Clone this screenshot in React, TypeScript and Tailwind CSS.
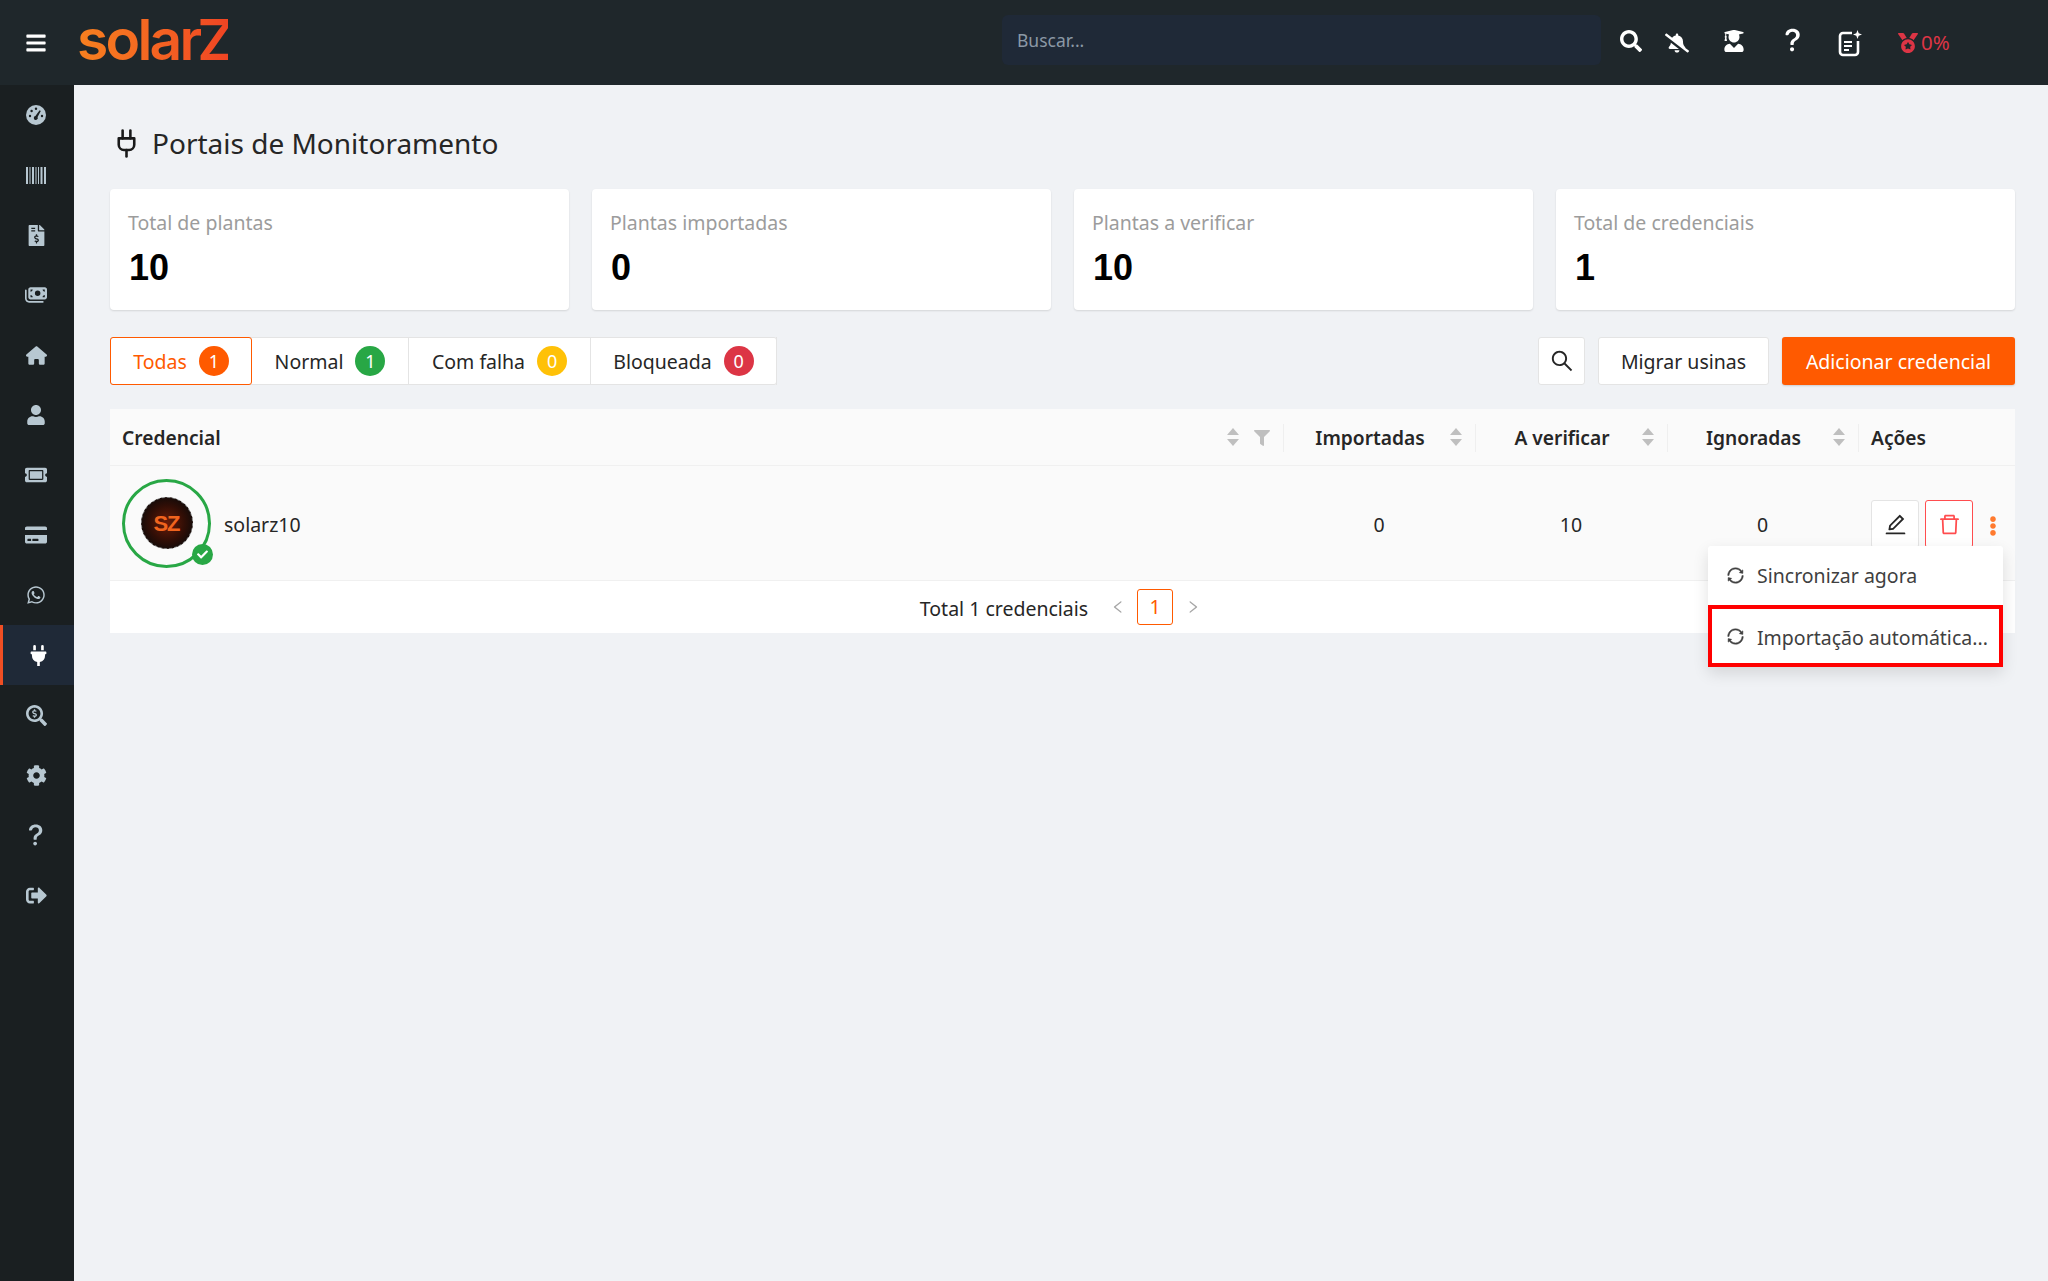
import React from 'react';
import {
  FaBars, FaBellSlash, FaCog, FaCreditCard, FaEllipsisV, FaFileInvoiceDollar, FaFilter,
  FaMedal, FaPlug, FaSearch, FaSearchDollar, FaSignOutAlt,
  FaTicketAlt, FaUser, FaUserGraduate, FaWhatsapp, FaCheck,
} from 'react-icons/fa';
import { FaHouse, FaMoneyBills } from 'react-icons/fa6';
import { BsQuestionLg } from 'react-icons/bs';
import { AiOutlineDelete, AiOutlineEdit, AiOutlineLeft, AiOutlineRight, AiOutlineSearch, AiOutlineSync } from 'react-icons/ai';
import { LuPlug } from 'react-icons/lu';

const GaugeIcon = ({ className }: { className?: string }) => (
  <svg viewBox="0 0 20 20" width="20" height="20" className={className}>
    <circle cx="10" cy="10" r="10" fill="currentColor" />
    <g fill="#1a1f21">
      <circle cx="4" cy="11" r="1.2" />
      <circle cx="5.6" cy="6" r="1.2" />
      <circle cx="10" cy="3.8" r="1.2" />
      <circle cx="16" cy="11" r="1.2" />
      <path d="M13.6 5.2l1.2.7-3.2 6.2a2 2 0 1 1-2.2-1.1z" />
    </g>
  </svg>
);

const BarsIcon = ({ className }: { className?: string }) => (
  <svg viewBox="0 0 20 17" width="20" height="17" className={className} fill="currentColor">
    <path d="M0 0h2v17H0zM3.5 0h1v17h-1zM6 0h2v17H6zM9.5 0h1v17h-1zM12 0h1v17h-1zM14.5 0h2v17h-2zM18 0h2v17h-2z" />
  </svg>
);

const SideQuestion = () => <BsQuestionLg className="text-[28px]" />;

const navItems = [
  { Icon: GaugeIcon, size: 'text-[21px]' },
  { Icon: BarsIcon, size: 'text-[21px]' },
  { Icon: FaFileInvoiceDollar, size: 'text-[21px]' },
  { Icon: FaMoneyBills, size: 'text-[22px]' },
  { Icon: FaHouse, size: 'text-[21px]' },
  { Icon: FaUser, size: 'text-[20px]' },
  { Icon: FaTicketAlt, size: 'text-[22px]' },
  { Icon: FaCreditCard, size: 'text-[22px]' },
  { Icon: FaWhatsapp, size: 'text-[20px]' },
  { Icon: FaPlug, size: 'text-[21px]' },
  { Icon: FaSearchDollar, size: 'text-[21px]' },
  { Icon: FaCog, size: 'text-[21px]' },
  { Icon: SideQuestion, size: '' },
  { Icon: FaSignOutAlt, size: 'text-[21px]' },
];

const stats = [
  { label: 'Total de plantas', value: '10' },
  { label: 'Plantas importadas', value: '0' },
  { label: 'Plantas a verificar', value: '10' },
  { label: 'Total de credenciais', value: '1' },
];

const tabs = [
  { label: 'Todas', count: 1, badge: 'bg-[#ff5a00]', width: 'w-[142px]', active: true },
  { label: 'Normal', count: 1, badge: 'bg-[#28a745]', width: 'w-[157px]', active: false },
  { label: 'Com falha', count: 0, badge: 'bg-[#ffc107]', width: 'w-[182px]', active: false },
  { label: 'Bloqueada', count: 0, badge: 'bg-[#dc3545]', width: 'w-[186px]', active: false },
];

const Sorter = () => (
  <svg width="14" height="20" viewBox="0 0 14 20" className="shrink-0 fill-[#bfbfbf]">
    <path d="M7 1l6 7H1z" />
    <path d="M7 19l6-7H1z" />
  </svg>
);

const NoteIcon = () => (
  <svg width="26" height="28" viewBox="0 0 26 28" fill="none" stroke="white" strokeWidth="2.6">
    <path d="M15 4H6a3 3 0 0 0-3 3v16a3 3 0 0 0 3 3h12a3 3 0 0 0 3-3V12" />
    <path d="M7 13h8M7 17h8M7 21h5" strokeWidth="2.2" />
    <path d="M20.5 1l1.2 3.3L25 5.5l-3.3 1.2-1.2 3.3-1.2-3.3L16 5.5l3.3-1.2z" fill="white" stroke="none" />
  </svg>
);

const SyncIcon = () => <AiOutlineSync className="text-[19px]" stroke="currentColor" strokeWidth={24} />;

const Th = ({ children }: { children: React.ReactNode }) => (
  <div className="relative flex items-center pl-3 pr-3">
    <span className="absolute left-0 top-[15px] h-[28px] w-px bg-[#efefef]" />
    <span className="flex-1 pr-[4px] pt-[3px] text-center">{children}</span>
    <Sorter />
  </div>
);

const App: React.FC = () => {
  return (
    <div className="flex min-h-screen flex-col bg-[#f0f2f5] font-['Noto_Sans',sans-serif] text-[19.5px] text-[#262626]">
      {/* Header */}
      <header className="flex h-[85px] shrink-0 items-center bg-[#1f272b]">
        <div className="flex w-[71px] justify-center">
          <FaBars className="text-[22px] text-white" />
        </div>
        <div className="ml-[6px] w-[151px]">
          <span className="mb-[6px] block bg-gradient-to-r from-[#f7801f] to-[#f04423] bg-clip-text font-['Inter',sans-serif] text-[57px] font-semibold leading-none tracking-[-2.8px] text-transparent">
            solarZ
          </span>
        </div>
        <div className="mb-[5px] ml-[774px] flex h-[50px] w-[599px] items-center rounded-md bg-[#1f2937] px-[15px] text-[17.5px] text-[#8b98a5]">
          Buscar...
        </div>
        <div className="flex items-center text-white">
          <span className="mb-[4px] flex w-[60px] justify-center"><FaSearch className="text-[22px]" /></span>
          <span className="flex w-[32px] justify-center"><FaBellSlash className="text-[24px]" /></span>
          <span className="mb-[3px] flex w-[82px] justify-center"><FaUserGraduate className="text-[22px]" /></span>
          <span className="mb-[5px] flex w-[36px] justify-center"><BsQuestionLg className="text-[30px]" /></span>
          <span className="flex w-[78px] justify-center"><NoteIcon /></span>
          <span className="ml-[9px] flex items-center gap-[3px] text-[20.5px] text-[#dc3545]">
            <FaMedal className="text-[20px]" />
            0%
          </span>
        </div>
      </header>

      <div className="flex flex-1">
        {/* Sidebar */}
        <aside className="w-[74px] shrink-0 bg-[#1a1f21]">
          {navItems.map(({ Icon, size }, i) => (
            <div
              key={i}
              className={
                i === 9
                  ? 'flex h-[60px] items-center justify-center border-l-[3px] border-[#f04e23] bg-[#1f2937] text-white'
                  : 'flex h-[60px] items-center justify-center pr-[2px] text-[#b7c7d1]'
              }
            >
              <Icon className={size} />
            </div>
          ))}
        </aside>

        {/* Content */}
        <main className="flex-1 pl-[36px] pr-[33px] pt-[36px]">
          <div className="flex h-[44px] items-center">
            <LuPlug className="ml-[1px] text-[31px] text-[#1a1a1a]" />
            <h1 className="ml-[10px] text-[28px] font-normal text-[#262626]">Portais de Monitoramento</h1>
          </div>

          <div className="mt-[24px] grid grid-cols-4 gap-[23px]">
            {stats.map((s) => (
              <div key={s.label} className="h-[121px] rounded-sm bg-white px-[18px] pt-[18px] shadow-[0_1px_2px_rgba(0,0,0,0.12)]">
                <div className="text-[19.5px] leading-[32px] text-[#9c9c9c]">{s.label}</div>
                <div className="ml-[1px] mt-[7px] font-['Liberation_Sans',sans-serif] text-[36px] font-bold leading-[44px] text-black">{s.value}</div>
              </div>
            ))}
          </div>

          {/* Tabs and actions */}
          <div className="mt-[27px] flex h-[48px] items-center justify-between">
            <div className="flex h-full rounded-[3px] bg-white shadow-[0_0_0_1px_#e4e4e4_inset]">
              {tabs.map((t) => (
                <div
                  key={t.label}
                  className={`flex h-full items-center justify-center gap-[12px] ${t.width} ${
                    t.active
                      ? 'rounded-[3px] border border-[#ff5a00] text-[#ff5a00]'
                      : 'border-r border-[#e4e4e4]'
                  }`}
                >
                  <span className="pt-[1px]">{t.label}</span>
                  <span className={`flex h-[30px] w-[30px] items-center justify-center rounded-full text-[18px] text-white ${t.badge}`}>
                    {t.count}
                  </span>
                </div>
              ))}
            </div>
            <div className="flex h-full items-center gap-[13px]">
              <div className="flex h-full w-[47px] items-center justify-center rounded-[3px] border border-[#e4e4e4] bg-white">
                <AiOutlineSearch className="text-[26px]" />
              </div>
              <div className="flex h-full w-[171px] items-center justify-center rounded-[3px] border border-[#e4e4e4] bg-white pt-[2px]">
                Migrar usinas
              </div>
              <div className="flex h-full w-[233px] items-center justify-center rounded-[3px] bg-[#ff5a00] pt-[2px] text-white shadow-[0_1px_2px_rgba(0,0,0,0.15)]">
                Adicionar credencial
              </div>
            </div>
          </div>

          {/* Table */}
          <div className="relative mt-[24px]">
            <div className="grid h-[57px] grid-cols-[1173px_192px_192px_191px_157px] border-b border-[#f0f0f0] bg-[#fafafa] text-[19.2px] font-semibold">
              <div className="flex items-center pl-3 pr-[13px]">
                <span className="flex-1 pt-[3px]">Credencial</span>
                <Sorter />
                <FaFilter className="ml-[14px] mt-[2px] text-[16px] text-[#bfbfbf]" />
              </div>
              <Th>Importadas</Th>
              <Th>A verificar</Th>
              <Th>Ignoradas</Th>
              <div className="relative flex items-center pl-[13px] pt-[3px]">
                <span className="absolute left-0 top-[15px] h-[28px] w-px bg-[#efefef]" />
                Ações
              </div>
            </div>

            <div className="grid h-[115px] grid-cols-[1173px_192px_192px_191px_157px] items-center border-b border-[#f0f0f0] bg-[#fafafa]">
              <div className="flex items-center pl-3">
                <div className="relative flex h-[89px] w-[89px] items-center justify-center rounded-full border-[3px] border-[#28a745]">
                  <div className="flex h-[52px] w-[52px] items-center justify-center rounded-full border border-dashed border-[#6b6b6b] bg-[radial-gradient(circle,#6a1c08_0%,#300e06_50%,#0a0a0a_85%)] font-['Liberation_Sans',sans-serif] text-[22px] font-bold tracking-[-1px] text-[#f0641e]">
                    SZ
                  </div>
                  <span className="absolute bottom-[0px] right-[-5px] flex h-[21px] w-[21px] items-center justify-center rounded-full bg-[#28a745]">
                    <FaCheck className="text-[11px] text-white" />
                  </span>
                </div>
                <span className="ml-[13px] pt-[3px]">solarz10</span>
              </div>
              <div className="pt-[3px] text-center">0</div>
              <div className="pt-[3px] text-center">10</div>
              <div className="pt-[3px] text-center">0</div>
              <div className="flex items-center pl-[13px] pt-[2px]">
                <div className="flex h-[48px] w-[48px] items-center justify-center rounded-[3px] border border-[#e4e4e4] bg-white">
                  <AiOutlineEdit className="text-[25px]" />
                </div>
                <div className="ml-[6px] flex h-[48px] w-[48px] items-center justify-center rounded-[3px] border border-[#ff4d4f] bg-white text-[#ff4d4f]">
                  <AiOutlineDelete className="text-[25px]" />
                </div>
                <FaEllipsisV className="ml-[10px] mt-[3px] text-[20px] text-[#ff7a2e]" />
              </div>
            </div>

            <div className="flex h-[52px] items-center justify-center bg-white pr-[4px]">
              <span className="pt-[4px]">Total 1 credenciais</span>
              <AiOutlineLeft className="ml-[22px] text-[16px] text-[#a6a6a6]" />
              <span className="ml-[11px] flex h-[36px] w-[36px] items-center justify-center rounded-[3px] border border-[#ff5a00] text-[#ff5a00]">1</span>
              <AiOutlineRight className="ml-[12px] text-[16px] text-[#a6a6a6]" />
            </div>

            {/* Row menu */}
            <div className="absolute right-[12px] top-[137px] w-[295px] rounded-[3px] bg-white text-[#404040] shadow-[0_6px_16px_rgba(0,0,0,0.12)]">
              <div className="flex h-[59px] items-center gap-[12px] pl-[18px]">
                <SyncIcon />
                <span className="pt-[1px]">Sincronizar agora</span>
              </div>
              <div className="flex h-[62px] items-center gap-[12px] border-[4px] border-[#ff0000] pl-[14px]">
                <SyncIcon />
                <span className="pt-[4px]">Importação automática...</span>
              </div>
            </div>
          </div>
        </main>
      </div>
    </div>
  );
};

export default App;
